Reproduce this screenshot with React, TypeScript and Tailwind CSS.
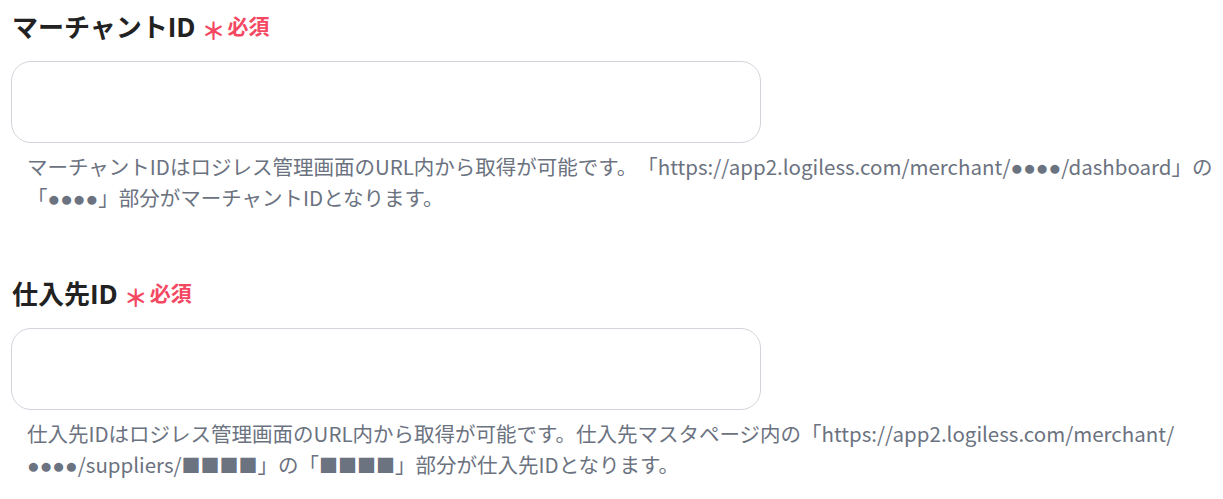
import React from "react";

const titleFont = { fontFamily: '"Open Sans", "Noto Sans CJK JP", sans-serif' };
const descFont = { fontFamily: '"Noto Sans CJK JP", sans-serif' };

function B() {
  return (
    <span className="text-[21px] leading-none" style={{ fontFamily: '"Liberation Sans", sans-serif' }}>
      ●●●●
    </span>
  );
}

function S() {
  return <span className="text-[19px] leading-none">■■■■</span>;
}

function Field({
  label,
  lines,
  gapTop,
}: {
  label: string;
  lines: React.ReactNode[];
  gapTop: string;
}) {
  return (
    <section className={gapTop}>
      <div className="flex items-center h-[41px] pl-[1px]" style={titleFont}>
        <span className="text-[26px] font-bold text-[#222222] leading-none">{label}</span>
        <span className="ml-[6px] text-[24px] font-bold text-[#f44862] leading-none mt-[8px]">＊</span>
        <span className="ml-[2px] text-[21px] font-bold text-[#f44862] leading-none">必須</span>
      </div>
      <input
        type="text"
        className="mt-[14px] block w-[750px] h-[82px] rounded-[20px] border border-[#d1d5db] bg-white outline-none"
      />
      <div
        className="mt-[8px] pl-[16px] text-[20.5px] leading-[31px] text-[#6b7280] [text-spacing-trim:space-all]"
        style={descFont}
      >
        {lines.map((l, i) => (
          <div key={i} className="whitespace-nowrap h-[31px]">
            {l}
          </div>
        ))}
      </div>
    </section>
  );
}

export default function App() {
  return (
    <div className="bg-white w-[1223px] h-[499px] overflow-hidden pl-[11px] pt-[6px]">
      <Field
        label="マーチャントID"
        gapTop=""
        lines={[
          <>
            マーチャントIDはロジレス管理画面のURL内から取得が可能です。「https://app2.logiless.com/merchant/<B />/dashboard」の
          </>,
          <>
            「<B />」部分がマーチャントIDとなります。
          </>,
        ]}
      />
      <Field
        label="仕入先ID"
        gapTop="mt-[60px]"
        lines={[
          "仕入先IDはロジレス管理画面のURL内から取得が可能です。仕入先マスタページ内の「https://app2.logiless.com/merchant/",
          <>
            <B />/suppliers/<S />」の「<S />」部分が仕入先IDとなります。
          </>,
        ]}
      />
    </div>
  );
}
